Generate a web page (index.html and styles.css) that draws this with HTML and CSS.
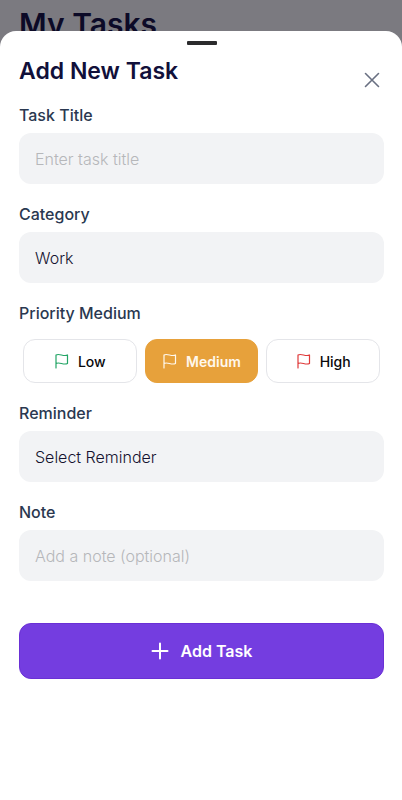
FILE: index.html
```html
<!DOCTYPE html>
<html lang="en">
<head>
<meta charset="utf-8">
<meta name="viewport" content="width=device-width, initial-scale=1">
<title>My Tasks</title>
<link rel="stylesheet" href="styles.css">
</head>
<body>
<header class="page-header"><h1 class="page-title">My Tasks</h1></header>
<main class="sheet">
  <div class="handle"></div>
  <div class="sheet-header">
    <h2 class="sheet-title">Add New Task</h2>
    <button class="close" type="button" aria-label="Close">
      <svg class="close-icon" viewBox="0 0 24 24"><path d="M5.500 5.500 18.500 18.500M18.500 5.500 5.500 18.500"/></svg>
    </button>
  </div>
  <form class="form">
    <div class="field">
      <label class="label" for="title">Task Title</label>
      <input class="control" id="title" type="text" placeholder="Enter task title">
    </div>
    <div class="field">
      <label class="label" for="category">Category</label>
      <select class="control" id="category"><option>Work</option></select>
    </div>
    <fieldset class="priority">
      <legend class="label">Priority Medium</legend>
      <div class="options">
        <label class="option low">
          <input class="radio" type="radio" name="priority" value="low">
          <svg class="flag" viewBox="0 0 16 18"><path d="M2 16V3C5.500 1 9.500 5 13.500 3V11.500C9.500 13.500 5.500 9.500 2 11.500"/></svg>
          <span>Low</span>
        </label>
        <label class="option medium">
          <input class="radio" type="radio" name="priority" value="medium" checked>
          <svg class="flag" viewBox="0 0 16 18"><path d="M2 16V3C5.500 1 9.500 5 13.500 3V11.500C9.500 13.500 5.500 9.500 2 11.500"/></svg>
          <span>Medium</span>
        </label>
        <label class="option high">
          <input class="radio" type="radio" name="priority" value="high">
          <svg class="flag" viewBox="0 0 16 18"><path d="M2 16V3C5.500 1 9.500 5 13.500 3V11.500C9.500 13.500 5.500 9.500 2 11.500"/></svg>
          <span>High</span>
        </label>
      </div>
    </fieldset>
    <div class="field">
      <label class="label" for="reminder">Reminder</label>
      <select class="control" id="reminder"><option>Select Reminder</option></select>
    </div>
    <div class="field">
      <label class="label" for="note">Note</label>
      <input class="control" id="note" type="text" placeholder="Add a note (optional)">
    </div>
    <button class="submit" type="button">
      <svg class="plus" viewBox="0 0 18 18"><path d="M9 1.500V16.500M1.500 9H16.500"/></svg>
      <span>Add Task</span>
    </button>
  </form>
</main>
</body>
</html>
```
FILE: styles.css
```css
* {
  box-sizing: border-box;
}

body {
  display: flex;
  flex-direction: column;
  min-height: 100vh;
  margin: 0;
  background: #7b7a80;
  color: #11103a;
  font-family: Inter, "Liberation Sans", sans-serif;
}

.page-header {
  height: 31px;
  padding: 4px 19px 0;
}

.page-title {
  margin: 0;
  color: #0c0a27;
  font-size: 30px;
  font-weight: 600;
  line-height: 40px;
}

.sheet {
  position: relative;
  flex: 1;
  padding: 10px 18px 24px 19px;
  border-radius: 16px 16px 0 0;
  background: #fff;
}

.handle {
  width: 30px;
  height: 4px;
  margin: 0 auto;
  border-radius: 1px;
  background: #2b2b2d;
}

.sheet-header {
  display: flex;
  justify-content: space-between;
  height: 60px;
  padding-top: 10px;
}

.sheet-title {
  margin: 0;
  font-size: 23px;
  font-weight: 600;
  line-height: 32px;
}

.close {
  display: flex;
  align-items: center;
  justify-content: center;
  width: 24px;
  height: 50px;
  padding: 0;
  border: 0;
  background: none;
}

.close-icon {
  width: 24px;
  height: 24px;
  fill: none;
  stroke: #697082;
  stroke-width: 1.6;
  stroke-linecap: round;
}

.form {
  display: flex;
  flex-direction: column;
  gap: 20px;
}

.field {
  display: flex;
  flex-direction: column;
  gap: 8px;
}

.label {
  padding: 0;
  color: #2a3850;
  font-size: 16px;
  font-weight: 500;
  line-height: 20px;
}

.control {
  appearance: none;
  width: 100%;
  height: 51px;
  margin: 0;
  padding: 0 16px;
  border: 0;
  border-radius: 12px;
  background: #f2f3f5;
  color: #14122f;
  font-family: inherit;
  font-size: 16px;
  font-weight: 300;
}

.control::placeholder {
  color: #b6b7ba;
  opacity: 1;
}

.priority {
  min-width: 0;
  margin: 0;
  padding: 0;
  border: 0;
}

.options {
  display: grid;
  grid-template-columns: repeat(3, 1fr);
  gap: 8px;
  padding: 16px 4px 0;
}

.option {
  display: flex;
  align-items: center;
  justify-content: center;
  gap: 8px;
  height: 44px;
  border: 1px solid #e4e5e9;
  border-radius: 12px;
  color: #09090b;
  font-size: 14px;
  font-weight: 500;
}

.radio {
  position: absolute;
  opacity: 0;
}

.flag {
  width: 16px;
  height: 18px;
  fill: none;
  stroke: currentColor;
  stroke-width: 1.2;
  stroke-linecap: round;
  stroke-linejoin: round;
}

.low .flag {
  color: #23a566;
}

.high .flag {
  color: #df3a3a;
}

.medium {
  border-color: #e7a13b;
  background: #e7a13b;
  color: #fff8ed;
  font-weight: 600;
}

.submit {
  display: flex;
  align-items: center;
  justify-content: center;
  gap: 12px;
  height: 56px;
  margin-top: 22px;
  padding: 0;
  border: 1px solid #6a30d5;
  border-radius: 12px;
  background: #743de0;
  color: #fff;
  font-family: inherit;
  font-size: 16px;
  font-weight: 600;
}

.plus {
  width: 18px;
  height: 18px;
  fill: none;
  stroke: currentColor;
  stroke-width: 2;
  stroke-linecap: round;
}
```
